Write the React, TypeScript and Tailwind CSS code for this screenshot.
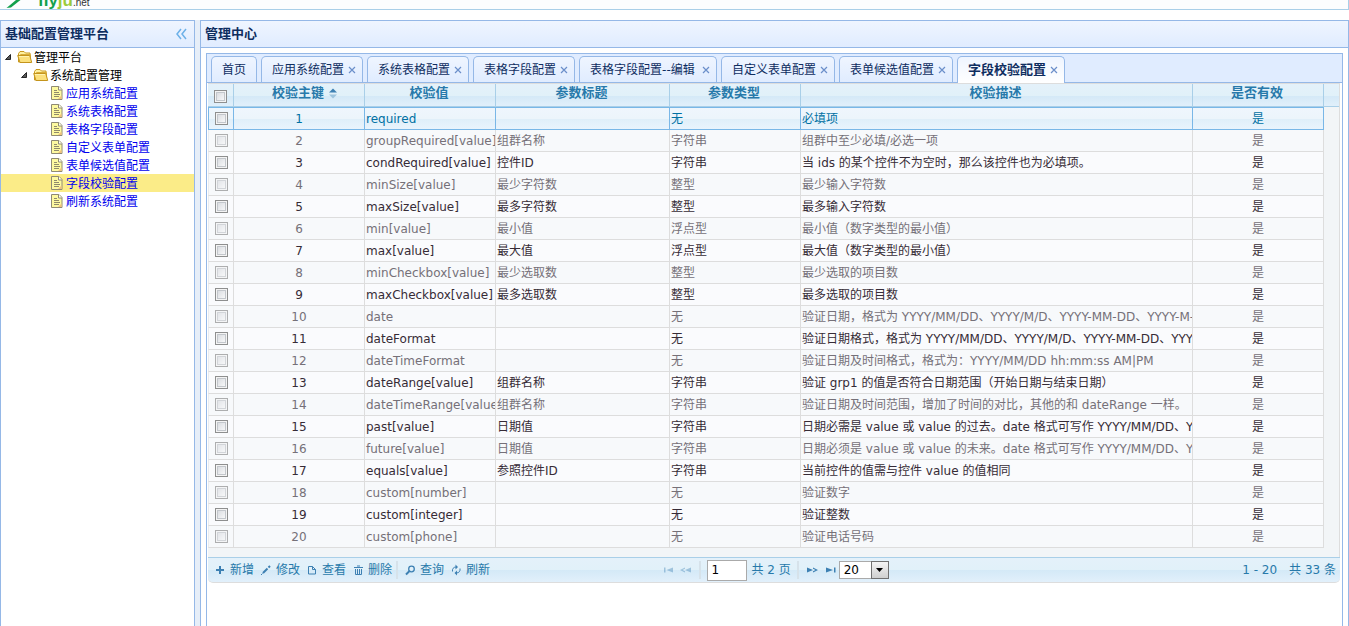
import React, { useState } from 'react';
import clsx from 'clsx';

interface Tab {
  title: string;
  closable?: boolean;
  className?: string;
}

interface RuleRow {
  name: string;
  title: string;
  type: string;
  desc: string;
}

const MENU = [
  '应用系统配置',
  '系统表格配置',
  '表格字段配置',
  '自定义表单配置',
  '表单候选值配置',
  '字段校验配置',
  '刷新系统配置',
];

const TABS: Tab[] = [
  { title: '首页' },
  { title: '应用系统配置', closable: true },
  { title: '系统表格配置', closable: true },
  { title: '表格字段配置', closable: true },
  { title: '表格字段配置--编辑', closable: true, className: 'min-w-[138px]' },
  { title: '自定义表单配置', closable: true },
  { title: '表单候选值配置', closable: true },
  { title: '字段校验配置', closable: true },
];

const ROWS: RuleRow[] = [
  { name: 'required', title: '', type: '无', desc: '必填项' },
  { name: 'groupRequired[value]', title: '组群名称', type: '字符串', desc: '组群中至少必填/必选一项' },
  { name: 'condRequired[value]', title: '控件ID', type: '字符串', desc: '当 ids 的某个控件不为空时，那么该控件也为必填项。' },
  { name: 'minSize[value]', title: '最少字符数', type: '整型', desc: '最少输入字符数' },
  { name: 'maxSize[value]', title: '最多字符数', type: '整型', desc: '最多输入字符数' },
  { name: 'min[value]', title: '最小值', type: '浮点型', desc: '最小值（数字类型的最小值）' },
  { name: 'max[value]', title: '最大值', type: '浮点型', desc: '最大值（数字类型的最小值）' },
  { name: 'minCheckbox[value]', title: '最少选取数', type: '整型', desc: '最少选取的项目数' },
  { name: 'maxCheckbox[value]', title: '最多选取数', type: '整型', desc: '最多选取的项目数' },
  { name: 'date', title: '', type: '无', desc: '验证日期，格式为 YYYY/MM/DD、YYYY/M/D、YYYY-MM-DD、YYYY-M-D' },
  { name: 'dateFormat', title: '', type: '无', desc: '验证日期格式，格式为 YYYY/MM/DD、YYYY/M/D、YYYY-MM-DD、YYYY-M-D' },
  { name: 'dateTimeFormat', title: '', type: '无', desc: '验证日期及时间格式，格式为：YYYY/MM/DD hh:mm:ss AM|PM' },
  { name: 'dateRange[value]', title: '组群名称', type: '字符串', desc: '验证 grp1 的值是否符合日期范围（开始日期与结束日期）' },
  { name: 'dateTimeRange[value]', title: '组群名称', type: '字符串', desc: '验证日期及时间范围，增加了时间的对比，其他的和 dateRange 一样。' },
  { name: 'past[value]', title: '日期值', type: '字符串', desc: '日期必需是 value 或 value 的过去。date 格式可写作 YYYY/MM/DD、YYYY/M/D' },
  { name: 'future[value]', title: '日期值', type: '字符串', desc: '日期必须是 value 或 value 的未来。date 格式可写作 YYYY/MM/DD、YYYY/M/D' },
  { name: 'equals[value]', title: '参照控件ID', type: '字符串', desc: '当前控件的值需与控件 value 的值相同' },
  { name: 'custom[number]', title: '', type: '无', desc: '验证数字' },
  { name: 'custom[integer]', title: '', type: '无', desc: '验证整数' },
  { name: 'custom[phone]', title: '', type: '无', desc: '验证电话号码' },
];

const HEADERS = ['校验主键', '校验值', '参数标题', '参数类型', '校验描述', '是否有效'];

const GLOSS =
  'bg-[linear-gradient(to_bottom,#e4f1fa_0%,#e1f1f9_50%,#d4e9f7_51%,#e2f0fb_100%)]';

function FolderIcon() {
  return (
    <svg width="16" height="16" viewBox="0 0 16 16" className="shrink-0" aria-hidden="true">
      <path d="M1.5 13V4.500L3 2.500h4l1.500 1.500H13v9z" fill="#fdf0a0" stroke="#c9981c" />
      <path d="M3.500 5.500h10v7h-10z" fill="#fffbdc" stroke="#d8ad3a" />
      <path d="M.7 6.500h12.100l1.900 7H3z" fill="#fbe07c" stroke="#c4941c" strokeLinejoin="round" />
      <path d="M2 7.500h10" stroke="#fff3b0" />
    </svg>
  );
}

function FileIcon() {
  return (
    <svg width="16" height="16" viewBox="0 0 16 16" className="shrink-0" aria-hidden="true">
      <path d="M2.500 1.500H10l3 3v10H2.500z" fill="#fdf9a0" stroke="#8f8a74" />
      <path d="M9.500 1.500v3.500H13" fill="#fff" stroke="#8f8a74" />
      <path d="M9 14h3.500v-3.500z" fill="#f3c27c" />
      <path d="M5 5.500h3M5 7.500h5M5 9.500h6M5 11.500h5" stroke="#8f8a6c" />
    </svg>
  );
}

function ExpandArrow() {
  return (
    <svg width="16" height="16" viewBox="0 0 16 16" className="shrink-0" aria-hidden="true">
      <path d="M9.500 5.500v5H4.500z" fill="#595959" stroke="#262626" strokeLinejoin="round" />
    </svg>
  );
}

function CloseIcon() {
  return (
    <svg width="8" height="8" viewBox="0 0 8 8" aria-hidden="true">
      <path d="M1 1l6 6M7 1L1 7" stroke="#6b8fca" strokeWidth="1.200" />
    </svg>
  );
}

function CheckBox({ label, dim, checked, onChange }: { label: string; dim?: boolean; checked: boolean; onChange: () => void }) {
  return (
    <input
      type="checkbox"
      aria-label={label}
      checked={checked}
      onChange={onChange}
      className={clsx(
        'block size-[13px] appearance-none border border-[#8e8f8f] bg-linear-to-br from-[#d3d6db] to-white shadow-[inset_0_0_0_1px_#f4f4f4,inset_0_0_0_2px_#c3c7cc] checked:from-[#2779aa]',
        dim && 'opacity-70',
      )}
    />
  );
}

function ToolButton({ label, children }: { label: string; children: React.ReactNode }) {
  return (
    <button type="button" className="flex items-center gap-[2px]">
      <svg width="16" height="16" viewBox="0 0 16 16" fill="none" stroke="#3d80b3" aria-hidden="true">
        {children}
      </svg>
      <span>{label}</span>
    </button>
  );
}

function PageButton({ label, disabled, children }: { label: string; disabled?: boolean; children: React.ReactNode }) {
  return (
    <button type="button" aria-label={label} disabled={disabled} className="disabled:opacity-40">
      <svg width="18" height="16" viewBox="-1 0 18 16" fill="#3d80b3" aria-hidden="true">
        {children}
      </svg>
    </button>
  );
}

function Separator() {
  return <span className="mx-1 h-[18px] w-[2px] bg-[#d6e2ea]" />;
}

function Sidebar() {
  const [selected, setSelected] = useState('字段校验配置');

  return (
    <aside className="flex w-[195px] shrink-0 flex-col border border-b-0 border-[#95b8e7] bg-white">
      <div className="flex h-[27px] shrink-0 items-center justify-between border-b border-[#95b8e7] bg-linear-to-b from-[#eff5ff] to-[#e0ecff] px-1">
        <h2 className="text-[13px] leading-4 font-bold text-[#0e2d5f]">基础配置管理平台</h2>
        <button type="button" aria-label="收起" className="mr-px">
          <svg width="16" height="16" viewBox="0 0 16 16" fill="none" stroke="#6cb0e8" strokeWidth="1.500" aria-hidden="true">
            <path d="M8 3L4 8l4 5M13 3L9 8l4 5" />
          </svg>
        </button>
      </div>
      <ul className="leading-4 text-black">
        <li>
          <div className="flex h-[18px] items-center">
            <ExpandArrow />
            <FolderIcon />
            <span className="pt-[2px] pl-px">管理平台</span>
          </div>
          <ul>
            <li>
              <div className="flex h-[18px] items-center pl-4">
                <ExpandArrow />
                <FolderIcon />
                <span className="pt-[2px] pl-px">系统配置管理</span>
              </div>
              <ul>
                {MENU.map((item) => (
                  <li key={item} className={clsx('flex h-[18px] items-center pl-12', item === selected && 'bg-[#fbec88]')}>
                    <FileIcon />
                    <a href="#" onClick={() => setSelected(item)} className="pt-[2px] pl-px text-[#0000ee]">
                      {item}
                    </a>
                  </li>
                ))}
              </ul>
            </li>
          </ul>
        </li>
      </ul>
    </aside>
  );
}

function TabBar() {
  const [active, setActive] = useState('字段校验配置');

  return (
    <div className="flex h-[29px] shrink-0 items-end gap-1 border-b border-[#95b8e7] bg-[#e0ecff] px-1" role="tablist">
      {TABS.map((tab) => {
        const isActive = tab.title === active;
        return (
          <div
            key={tab.title}
            className={clsx(
              'flex items-center justify-between rounded-t-[5px] border border-b-0 border-[#95b8e7] bg-linear-to-b from-[#eff5ff]',
              isActive ? '-mb-px h-[27px] to-white' : 'h-[26px] to-[#e0ecff]',
              tab.closable ? 'pr-[6px] pl-[10px]' : 'px-[10px]',
              tab.className,
            )}
          >
            <button
              type="button"
              role="tab"
              aria-selected={isActive}
              onClick={() => setActive(tab.title)}
              className={clsx('leading-4 whitespace-nowrap text-[#0e2d5f]', isActive && 'text-[13px] font-bold')}
            >
              {tab.title}
            </button>
            {tab.closable && (
              <button type="button" aria-label={'关闭 ' + tab.title} className="ml-1">
                <CloseIcon />
              </button>
            )}
          </div>
        );
      })}
    </div>
  );
}

function RuleTable() {
  const [current, setCurrent] = useState(0);
  const [checked, setChecked] = useState<number[]>([]);

  const toggle = (i: number) =>
    setChecked((prev) => (prev.includes(i) ? prev.filter((n) => n !== i) : [...prev, i]));

  return (
    <table className="w-full table-fixed border-separate border-spacing-0">
      <colgroup>
        <col className="w-[26px]" />
        <col className="w-[131px]" />
        <col className="w-[131px]" />
        <col className="w-[174px]" />
        <col className="w-[131px]" />
        <col />
        <col className="w-[131px]" />
        <col className="w-[15px]" />
      </colgroup>
      <thead>
        <tr className={GLOSS}>
          <th className="h-[23px] border-r border-b border-[#a9cfe8] p-0 pt-[3px] pl-[6px]">
            <CheckBox
              label="全选"
              checked={checked.length === ROWS.length}
              onChange={() => setChecked(checked.length === ROWS.length ? [] : ROWS.map((_, i) => i))}
            />
          </th>
          {HEADERS.map((h, i) => (
            <th key={h} className="h-[23px] border-r border-b border-[#a9cfe8] p-0 pr-[2px] pb-[4px] text-[13px] leading-4 font-bold text-[#2779aa]">
              {h}
              {i === 0 && (
                <svg width="8" height="11" viewBox="0 0 8 11" className="-mr-[13px] ml-[5px] inline-block align-[-2px]" aria-hidden="true">
                  <path d="M0 4.500L4 .5l4 4z" fill="#3d80b3" />
                  <path d="M0 6.500l4 4 4-4z" fill="#9dc4de" />
                </svg>
              )}
            </th>
          ))}
          <th className="border-b border-[#a9cfe8] p-0" />
        </tr>
      </thead>
      <tbody>
        {ROWS.map((row, i) => {
          const isCurrent = i === current;
          const dim = i % 2 === 1 && !isCurrent;
          const cell = clsx(
            'overflow-hidden border-r border-b p-0 leading-4 whitespace-nowrap',
            isCurrent ? 'h-[23px] border-t border-[#79b7e7]' : 'h-[22px] border-[#dddddd]',
          );
          return (
            <tr
              key={row.name}
              onClick={() => setCurrent(i)}
              className={clsx(
                isCurrent && 'bg-[linear-gradient(to_bottom,#eff6fd_0%,#ecf5fb_50%,#dfeff9_51%,#eaf4fd_100%)] text-[#0070a3]',
                !isCurrent && (dim ? 'bg-[#f7f9fb] text-[#757078]' : 'bg-[#fafbfd] text-[#362b36]'),
              )}
            >
              <td className={clsx(cell, 'border-l pl-[6px]', !isCurrent && 'border-l-[#e9ecf0]')}>
                <CheckBox label={'选择 ' + row.name} dim={dim} checked={checked.includes(i)} onChange={() => toggle(i)} />
              </td>
              <td className={clsx(cell, 'text-center')}>{i + 1}</td>
              <td className={clsx(cell, 'pl-px')}>{row.name}</td>
              <td className={clsx(cell, 'pl-px')}>{row.title}</td>
              <td className={clsx(cell, 'pl-px')}>{row.type}</td>
              <td className={clsx(cell, 'pl-px')}>{row.desc}</td>
              <td className={clsx(cell, 'text-center')}>是</td>
              <td className="bg-[#f2f5f7] p-0" />
            </tr>
          );
        })}
      </tbody>
    </table>
  );
}

function Pager() {
  return (
    <div className={clsx('flex h-[26px] items-center justify-between rounded-b-[5px] border-t border-b border-t-[#a9cfe8] border-b-[#dddddd] px-1 leading-4 text-[#2779aa]', GLOSS)}>
      <div className="flex flex-1 items-center">
        <div className="flex gap-1">
          <ToolButton label="新增">
            <path d="M8 4v8M4 8h8" strokeWidth="2" />
          </ToolButton>
          <ToolButton label="修改">
            <path d="M5 11l4.500-4.500" strokeWidth="2" />
            <path d="M10.500 5.500L12 4" strokeWidth="2" />
            <path d="M3 13l1.500-1.500" />
          </ToolButton>
          <ToolButton label="查看">
            <path d="M4.500 4.500h4l3 3v4.500h-7zM8.500 4.500v3h3" />
          </ToolButton>
          <ToolButton label="删除">
            <path d="M4 5.500h9M7 4h3" strokeWidth="1.200" />
            <path d="M5.500 7v5.500h6V7M7.500 7v5M9.500 7v5" />
          </ToolButton>
        </div>
        <Separator />
        <div className="flex gap-1">
          <ToolButton label="查询">
            <circle cx="9.500" cy="7" r="2.800" strokeWidth="1.300" />
            <path d="M7.500 9L4 12.500" strokeWidth="2" />
          </ToolButton>
          <ToolButton label="刷新">
            <path d="M4.500 9.500C4 7 5.500 5 8 5M12 6.500c.5 2.500-1 4.500-3.500 4.500" />
            <path d="M7.500 2.500L10 5 7.500 7.500zM9 8.500L6.500 11 9 13.500z" fill="#3d80b3" stroke="none" />
          </ToolButton>
        </div>
      </div>
      <div className="flex items-center">
        <PageButton label="首页" disabled>
          <path d="M4 5.500h1.500v5H4zM13 5.500v5L6.500 8z" />
        </PageButton>
        <PageButton label="上一页" disabled>
          <path d="M13 5.500v5L7 8zM7 5.500v1.200L4.500 8 7 9.300v1.200L2 8z" />
        </PageButton>
        <Separator />
        <input
          aria-label="页码"
          defaultValue="1"
          className="mx-[2px] h-[21px] w-10 border border-[#aaaaaa] bg-white pl-[3px] text-black outline-none"
        />
        <span className="px-[2px] whitespace-nowrap">共 2 页</span>
        <Separator />
        <PageButton label="下一页">
          <path d="M3 5.500v5L9 8zM9 5.500v1.200L11.500 8 9 9.300v1.200L14 8z" />
        </PageButton>
        <PageButton label="末页">
          <path d="M12 5.500h1.500v5H12zM4 5.500v5L11 8z" />
        </PageButton>
        <div className="relative">
          <select
            aria-label="每页条数"
            defaultValue="20"
            className="block h-[18px] w-[50px] appearance-none border border-[#aaaaaa] bg-white pl-1 text-xs leading-4 text-black outline-none"
          >
            <option>10</option>
            <option>20</option>
            <option>50</option>
          </select>
          <span className="pointer-events-none absolute top-0 right-0 flex h-[18px] w-[18px] items-center justify-center border border-[#707070] bg-linear-to-b from-[#f4f4f4] to-[#cfcfcf]">
            <svg width="7" height="4" viewBox="0 0 7 4" aria-hidden="true">
              <path d="M0 0h7L3.500 4z" fill="#000" />
            </svg>
          </span>
        </div>
      </div>
      <div className="flex flex-1 justify-end gap-3 whitespace-nowrap">
        <span>1 - 20</span>
        <span>共 33 条</span>
      </div>
    </div>
  );
}

export default function App() {
  return (
    <div className="flex h-screen flex-col overflow-hidden bg-white font-['DejaVu_Sans','Noto_Sans_CJK_SC',sans-serif] text-xs">
      <header className="flex h-[10px] shrink-0 items-end overflow-hidden border-r border-b border-[#a9cfe8] bg-[#fcfdfe]">
        <svg width="24" height="9" viewBox="0 0 24 9" className="ml-1 shrink-0" aria-hidden="true">
          <path d="M2.500 8L12 0h4.500L7 7.500z" fill="#12a04c" />
        </svg>
        <div className="ml-[10px] flex items-baseline font-['Liberation_Sans',sans-serif] leading-3 font-bold">
          <span className="text-[17px] leading-3 text-[#12a04c]">fly</span>
          <span className="text-[17px] leading-3 text-[#9ccb3b]">ju</span>
          <span className="text-[10px] leading-3 font-normal text-[#333333]">.net</span>
        </div>
      </header>
      <div className="mt-[10px] flex min-h-0 flex-1 gap-[5px] bg-[#e6eef8]">
        <Sidebar />
        <main className="flex min-w-0 flex-1 flex-col border border-b-0 border-[#95b8e7] bg-white">
          <h2 className="flex h-[27px] shrink-0 items-center border-b border-[#95b8e7] bg-linear-to-b from-[#eff5ff] to-[#e0ecff] px-1 text-[13px] leading-4 font-bold text-[#0e2d5f]">
            管理中心
          </h2>
          <div className="mx-[5px] mt-[5px] flex min-h-0 flex-1 flex-col border border-b-0 border-[#95b8e7]">
            <TabBar />
            <div className="pr-[2px] pl-px">
              <div className="border-t border-r border-[#dddddd] bg-[#f2f5f7] pb-[9px]">
                <RuleTable />
              </div>
              <Pager />
            </div>
          </div>
        </main>
      </div>
    </div>
  );
}
